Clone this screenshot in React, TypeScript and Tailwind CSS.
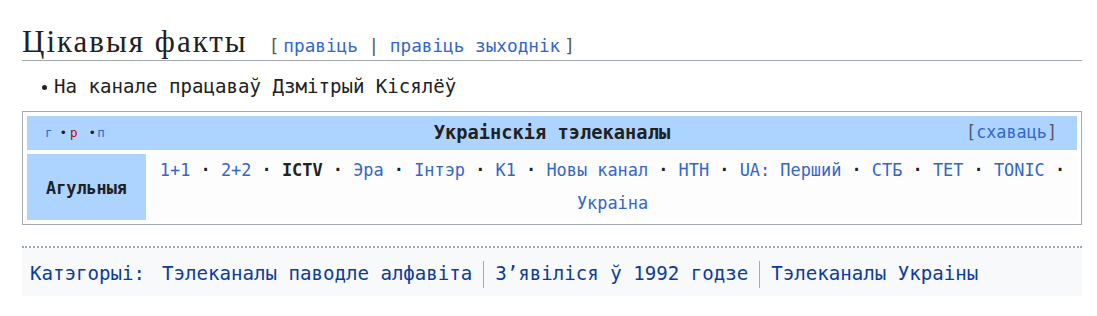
import React from 'react';

const channels: { name: string; bold?: boolean }[] = [
  { name: '1+1' },
  { name: '2+2' },
  { name: 'ICTV', bold: true },
  { name: 'Эра' },
  { name: 'Інтэр' },
  { name: 'К1' },
  { name: 'Новы канал' },
  { name: 'НТН' },
  { name: 'UA: Перший' },
  { name: 'СТБ' },
  { name: 'ТЕТ' },
  { name: 'TONIC' },
];

const categories = ['Тэлеканалы паводле алфавіта', 'З’явіліся ў 1992 годзе', 'Тэлеканалы Украіны'];

const App: React.FC = () => {
  return (
    <div className="w-[1097px] h-[316px] bg-white font-['DejaVu_Sans_Mono',monospace] text-[#202122] overflow-hidden">
      <div className="ml-[22px] w-[1060px]">
        {/* Section heading */}
        <h2 className="mt-[23px] border-b border-[#a2a9b1] font-['Liberation_Serif',serif] text-[31px] leading-[37px] whitespace-nowrap">
          <span className="tracking-[2px]">Цікавыя факты</span>
          <span className="ml-[21px] font-['DejaVu_Sans_Mono',monospace] text-[17.7px] leading-none text-[#54595d]">
            [<span className="ml-[4px] text-[#3366cc]">правіць</span> | <span className="text-[#3366cc]">правіць зыходнік</span>
            <span className="ml-[4px]">]</span>
          </span>
        </h2>

        {/* Facts list */}
        <div className="mt-[11px] h-[30px] flex items-center text-[19.1px]">
          <span className="ml-[20px] w-[5px] h-[5px] rounded-full bg-[#202122]" />
          <span className="ml-[7px]">На канале працаваў Дзмітрый Кісялёў</span>
        </div>

        {/* Navbox */}
        <div className="mt-[9px] border border-[#a2a9b1] p-[4px] flex flex-col gap-[4px]">
          <div className="h-[34px] bg-[#acd4ff] grid grid-cols-[1fr_auto_1fr] items-center">
            <div className="pl-[18px] flex items-center text-[12.5px] text-[#3366cc]">
              <span>г</span>
              <span className="ml-[7px] text-[#202122]">•</span>
              <span className="ml-[3px] text-[#ba0000]">р</span>
              <span className="ml-[11px] text-[#202122]">•</span>
              <span className="ml-[1px]">п</span>
            </div>
            <div className="font-bold text-[18.7px]">Украінскія тэлеканалы</div>
            <div className="pr-[20px] flex justify-end text-[16.8px]">
              <span className="text-[#54595d]">[</span>
              <span className="text-[#3366cc]">схаваць</span>
              <span className="text-[#54595d]">]</span>
            </div>
          </div>
          <div className="h-[66px] flex gap-[2px]">
            <div className="w-[119px] pt-[3px] bg-[#acd4ff] flex items-center justify-center font-bold text-[16.8px]">
              Агульныя
            </div>
            <div className="flex-1 bg-[#fdfdfd] text-center text-[16.9px] leading-[33px]">
              <div className="whitespace-pre">
                {channels.map((c, i) => (
                  <React.Fragment key={c.name}>
                    <span className={c.bold ? 'font-bold text-[#202122]' : 'text-[#3366cc]'}>{c.name}</span>
                    <span className="font-bold">{i === channels.length - 1 ? ' ·' : ' · '}</span>
                  </React.Fragment>
                ))}
              </div>
              <div className="text-[#3366cc]">Украіна</div>
            </div>
          </div>
        </div>

        {/* Categories */}
        <div className="mt-[21px] border-t-2 border-dotted border-[#a2a9b1]">
          <div className="h-[48px] pt-[4px] bg-[#f8f9fa] flex items-center pl-[8px] text-[19.1px] text-[#0b3b9e] whitespace-nowrap">
            <span>Катэгорыі:</span>
            <span className="ml-[17px]">{categories[0]}</span>
            {categories.slice(1).map((c) => (
              <React.Fragment key={c}>
                <span className="mx-[11px] w-px h-[27px] bg-[#a2a9b1]" />
                <span>{c}</span>
              </React.Fragment>
            ))}
          </div>
        </div>
      </div>
    </div>
  );
};

export default App;
